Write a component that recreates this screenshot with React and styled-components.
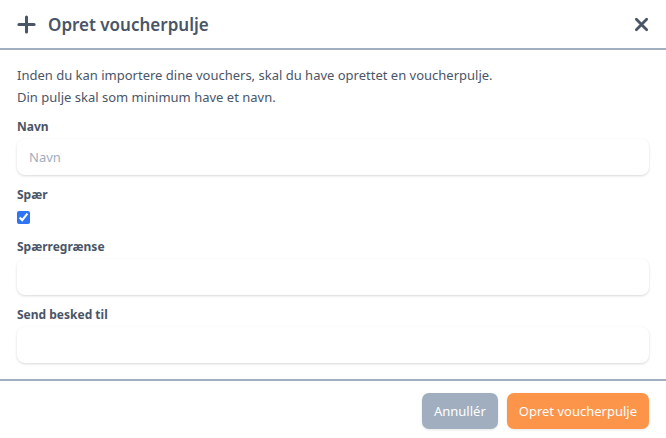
import React, { useState } from "react";
import styled, { createGlobalStyle } from "styled-components";

const GlobalStyle = createGlobalStyle`
  html, body {
    margin: 0;
    padding: 0;
    background: #ffffff;
  }
  body {
    font-family: "Noto Sans", "Open Sans", sans-serif;
    color: #4a5568;
  }
  * {
    box-sizing: border-box;
  }
`;

const Modal = styled.div`
  width: 666px;
  height: 438px;
  background: #ffffff;
  display: flex;
  flex-direction: column;
`;

const Header = styled.div`
  height: 50px;
  display: flex;
  align-items: center;
  justify-content: space-between;
  padding: 0 17px;
  border-bottom: 2px solid #a0aec0;
`;

const Title = styled.h2`
  margin: 0;
  display: flex;
  align-items: center;
  gap: 12px;
  font-size: 17px;
  font-weight: 600;
  color: #4a5568;
`;

const CloseButton = styled.button`
  background: none;
  border: none;
  padding: 0;
  cursor: pointer;
  display: flex;
  color: #4a5568;
`;

const Body = styled.div`
  flex: 1;
  padding: 14px 17px 0;
  display: flex;
  flex-direction: column;
`;

const Intro = styled.p`
  margin: 0 0 11px;
  font-size: 13px;
  line-height: 22px;
  color: #4a5568;
`;

const Field = styled.div`
  display: flex;
  flex-direction: column;
  gap: 4px;
  margin-bottom: ${(props) => props.spacing || 12}px;
`;

const Label = styled.label`
  font-size: 12px;
  font-weight: 700;
  line-height: 16px;
  color: #4a5568;
`;

const Input = styled.input`
  height: 36px;
  width: 100%;
  border: none;
  border-radius: 8px;
  background: #fff;
  box-shadow: 0 1px 3px rgba(0, 0, 0, 0.12), 0 1px 2px rgba(0, 0, 0, 0.04);
  padding: 0 12px;
  font-family: inherit;
  font-size: 13px;
  color: #4a5568;
  outline: none;

  &::placeholder {
    color: #a0aec0;
  }
`;

const Checkbox = styled.input`
  margin: 4px 0 0;
  width: 13px;
  height: 13px;
  accent-color: #2f74f5;
`;

const Footer = styled.div`
  border-top: 2px solid #a0aec0;
  display: flex;
  justify-content: flex-end;
  gap: 9px;
  padding: 12px 17px 0;
  height: 59px;
`;

const Button = styled.button`
  height: 36px;
  padding: 0 12px;
  border: none;
  border-radius: 7px;
  font-family: inherit;
  font-size: 13px;
  color: #ffffff;
  cursor: pointer;
  background: ${(props) => (props.primary ? "#fc9549" : "#a0aec0")};
  box-shadow: 0 1px 3px rgba(0, 0, 0, 0.1);
`;

export default function App() {
  const [locked, setLocked] = useState(true);

  return (
    <Modal>
      <GlobalStyle />
      <Header>
        <Title>
          <svg width="19" height="19" viewBox="0 0 20 20">
            <path
              d="M10 2v16M2 10h16"
              stroke="currentColor"
              strokeWidth="3.2"
              strokeLinecap="round"
            />
          </svg>
          Opret voucherpulje
        </Title>
        <CloseButton>
          <svg width="15" height="15" viewBox="0 0 16 16">
            <path
              d="M2.5 2.5l11 11M13.5 2.5l-11 11"
              stroke="currentColor"
              strokeWidth="3"
              strokeLinecap="round"
            />
          </svg>
        </CloseButton>
      </Header>

      <Body>
        <Intro>
          Inden du kan importere dine vouchers, skal du have oprettet en voucherpulje.
          <br />
          Din pulje skal som minimum have et navn.
        </Intro>

        <Field>
          <Label>Navn</Label>
          <Input placeholder="Navn" />
        </Field>

        <Field spacing={15}>
          <Label>Spær</Label>
          <Checkbox
            type="checkbox"
            checked={locked}
            onChange={() => setLocked(!locked)}
          />
        </Field>

        <Field>
          <Label>Spærregrænse</Label>
          <Input />
        </Field>

        <Field>
          <Label>Send besked til</Label>
          <Input />
        </Field>
      </Body>

      <Footer>
        <Button>Annullér</Button>
        <Button primary>Opret voucherpulje</Button>
      </Footer>
    </Modal>
  );
}
